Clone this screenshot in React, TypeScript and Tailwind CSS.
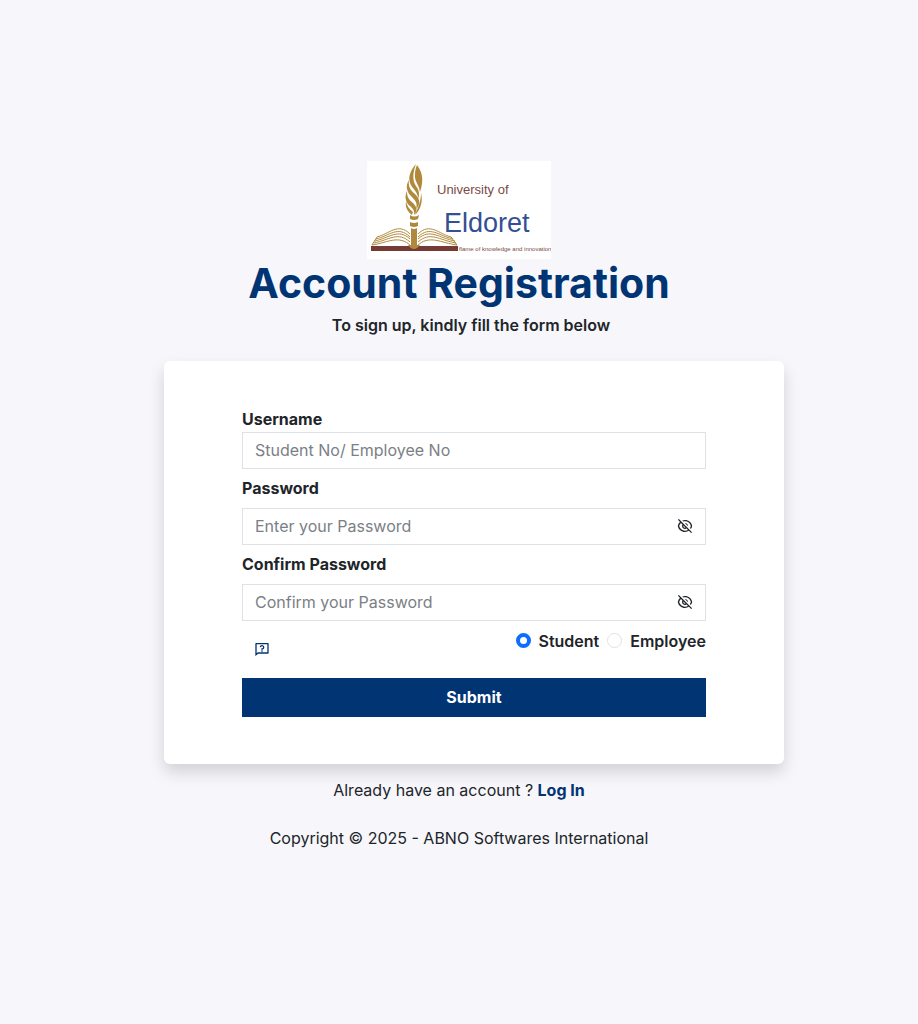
import { useState } from 'react'
import { RiEyeOffLine, RiEyeLine, RiQuestionnaireLine } from 'react-icons/ri'

function Logo() {
  return (
    <svg viewBox="0 0 184 98" className="w-[184px] h-[98px] bg-white" role="img" aria-label="University of Eldoret">
      <g fill="#b08a3c">
        <path d="M49 3C43 10 41 16 43 22C45 28 51 30 51 38C53 33 52 29 49 25C45 19 46 11 49 3Z" />
        <path d="M50 4C57 13 56 22 53 31C52 23 47 20 48 13C48 9 49 7 50 4Z" />
        <path d="M42 19C38 25 40 31 44 35C48 39 51 42 49 48C54 43 53 38 48 33C43 29 41 25 42 19Z" />
        <path d="M40 30C37 36 39 42 43 45C46 48 48 50 47 54C51 50 50 46 46 42C41 38 40 35 40 30Z" />
        <path d="M39 40C38 47 41 51 45 54L46 51C42 48 40 45 39 40Z" />
        <path d="M54 32C56 40 54 48 48 54C51 46 54 41 54 32Z" />
        <path d="M43 54Q47 57 52 54L51 58Q47 60 43 58Z" />
        <path d="M43 61Q47 63 51 61V65Q47 67 43 65Z" />
        <path d="M44 67Q47 69 50 67V85Q47 88 44 85Z" />
      </g>
      <path d="M4 85H91V90H4Z" fill="#773b36" />
      <path d="M41 84Q47 92 53 84Z" fill="#b08a3c" />
      <g fill="none" stroke="#b08a3c" strokeWidth="1">
        <path d="M10 76C22 73 31 61 43 73" />
        <path d="M9 78C22 75 31 64 43 76" />
        <path d="M8 80C22 77 31 67 43 78" />
        <path d="M7 82C22 79 31 70 43 81" />
        <path d="M10 76L5 84C20 82 32 73 44 85" />
        <path d="M51 73C63 61 72 73 84 76" />
        <path d="M51 76C63 64 72 75 86 78" />
        <path d="M51 78C63 67 72 77 88 80" />
        <path d="M51 81C63 70 72 79 89 82" />
        <path d="M84 76L90 84C74 82 62 73 50 85" />
      </g>
      <g fontFamily="'Liberation Sans', Arial, sans-serif">
        <text x="70" y="33" fontSize="13" fill="#7b4a44">University of</text>
        <text x="77" y="71" fontSize="27" fill="#344f93">Eldoret</text>
        <text x="92" y="90" fontSize="6" fill="#7b4a44">flame of knowledge and innovation</text>
      </g>
    </svg>
  )
}

function PasswordField({ id, label, placeholder }: { id: string; label: string; placeholder: string }) {
  const [visible, setVisible] = useState(false)
  return (
    <div className="mt-[7px]">
      <label htmlFor={id} className="block mb-2 font-bold">{label}</label>
      <div className="flex h-[37px] border border-[#dee2e6]">
        <input id={id} type={visible ? 'text' : 'password'} placeholder={placeholder} className="flex-1 min-w-0 px-3 bg-white placeholder:text-[#7b8086] outline-none" />
        <button type="button" aria-label="Toggle password visibility" onClick={() => setVisible(!visible)} className="px-3">
          {visible ? <RiEyeLine className="w-4 h-4" /> : <RiEyeOffLine className="w-4 h-4" />}
        </button>
      </div>
    </div>
  )
}

const radioClass = 'appearance-none w-[15px] h-[15px] rounded-full border border-[#dee2e6] bg-white checked:border-4 checked:border-[#0d6efd]'

export default function App() {
  return (
    <main className="min-h-screen flex items-center justify-center bg-[#f6f6fb] font-['Inter',sans-serif] text-base leading-6 text-[#212529]">
      <div className="w-full max-w-[650px] flex flex-col items-center">
        <Logo />
        <h1 className="text-[41px] leading-[48px] font-bold text-[#003473] text-center">Account Registration</h1>
        <p className="mt-1.5 pl-6 font-semibold text-center">To sign up, kindly fill the form below</p>

        <div className="w-full mt-6 pl-[30px]">
          <form onSubmit={(e) => e.preventDefault()} className="px-6 sm:px-[78px] pt-[46px] pb-[47px] bg-white rounded-md shadow-[0_8px_16px_rgba(0,0,0,0.15)]">
            <label htmlFor="username" className="block font-bold">Username</label>
            <input id="username" type="text" placeholder="Student No/ Employee No" className="block w-full h-[37px] mt-px px-3 bg-white border border-[#dee2e6] placeholder:text-[#7b8086] outline-none" />

            <PasswordField id="password" label="Password" placeholder="Enter your Password" />
            <PasswordField id="confirm" label="Confirm Password" placeholder="Confirm your Password" />

            <div className="flex items-start justify-between mt-2">
              <button type="button" aria-label="Help" className="mt-3 ml-3 text-[#003473]">
                <RiQuestionnaireLine className="w-4 h-4" />
              </button>
              <div className="flex gap-2 font-semibold">
                <label className="flex items-center gap-2">
                  <input type="radio" name="role" defaultChecked className={radioClass} />
                  Student
                </label>
                <label className="flex items-center gap-2">
                  <input type="radio" name="role" className={radioClass} />
                  Employee
                </label>
              </div>
            </div>

            <button type="submit" className="block w-full h-[39px] mt-[21px] bg-[#003473] text-white font-bold">Submit</button>
          </form>
        </div>

        <p className="mt-3.5 text-center">
          Already have an account ? <a href="#" className="font-bold text-[#003473]">Log In</a>
        </p>
        <p className="mt-6 mb-3.5 text-center">Copyright © 2025 - ABNO Softwares International</p>
      </div>
    </main>
  )
}
